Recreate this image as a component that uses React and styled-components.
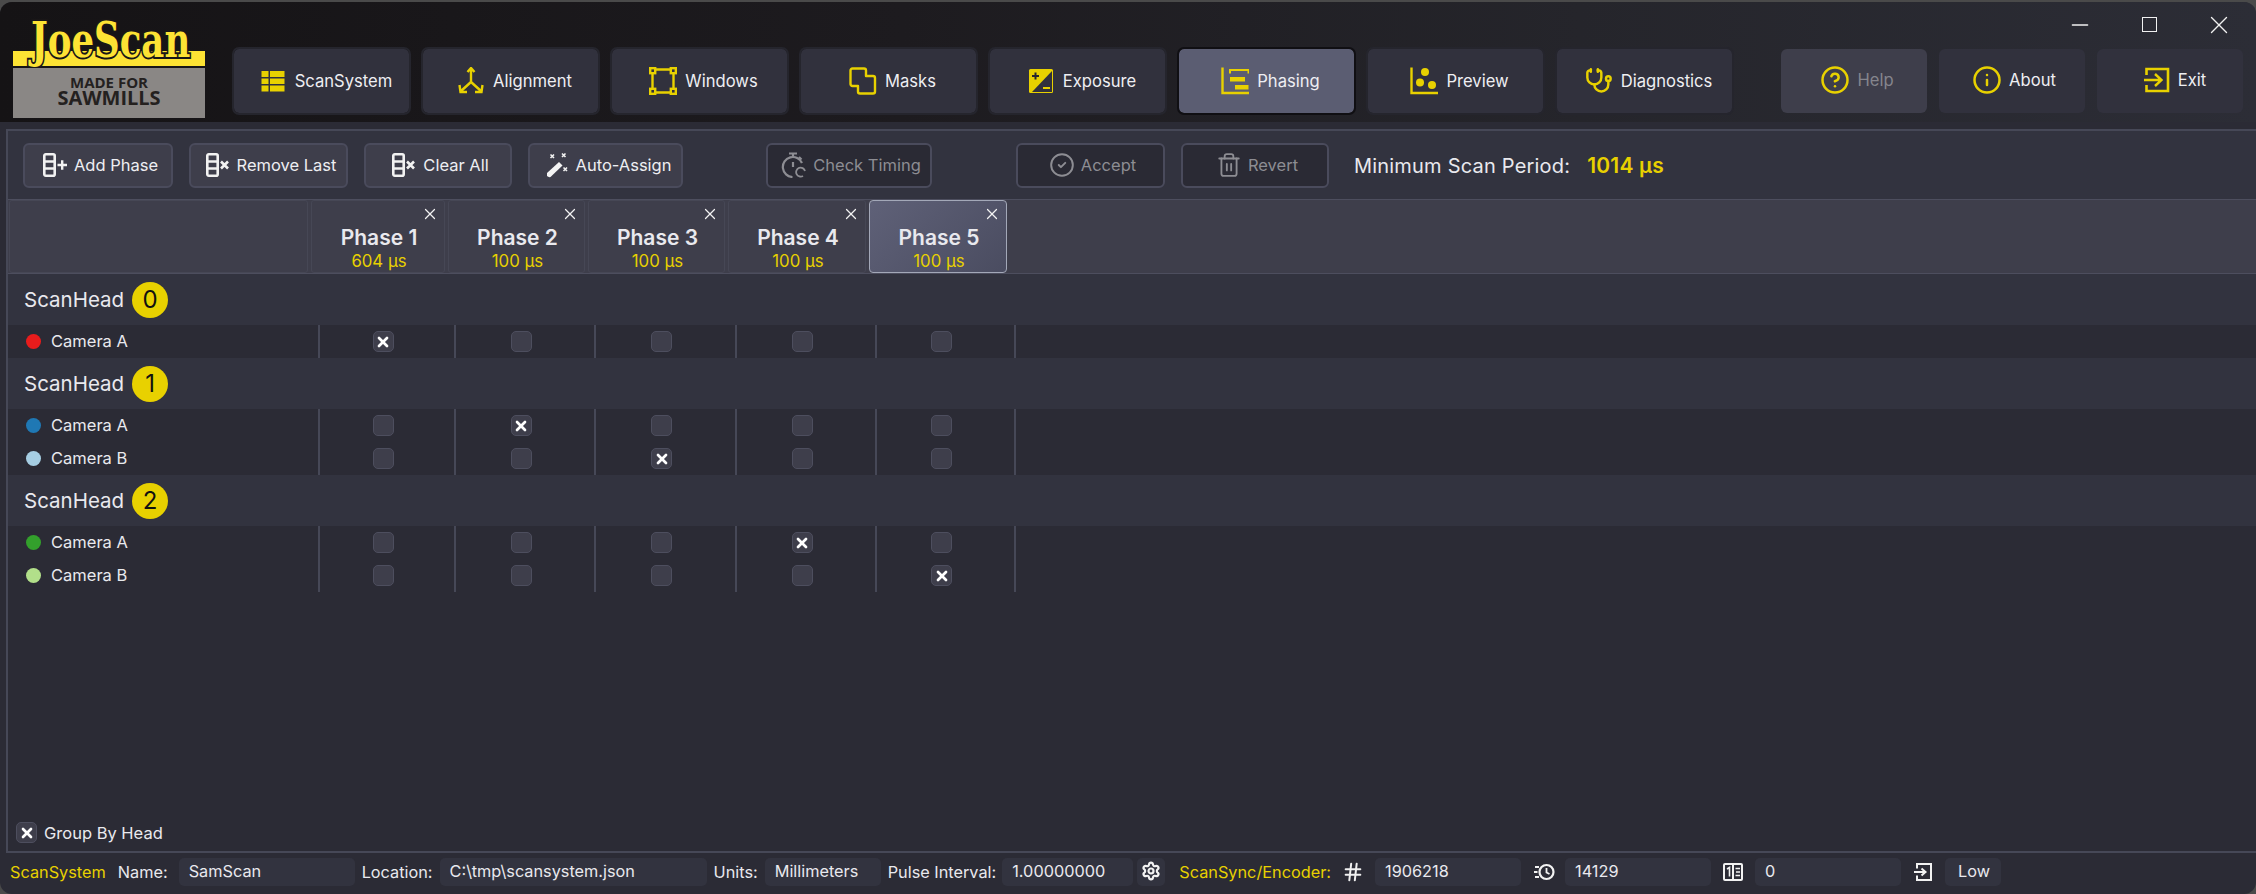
import React from "react";
import styled, { createGlobalStyle } from "styled-components";
import { Stethoscope, CircleHelp, Info, CircleCheck, Trash2, Hash, X, Minus, Settings } from "lucide-react";

const YELLOW = "#e8d100";

const GlobalStyle = createGlobalStyle`
  html, body {
    margin: 0;
    padding: 0;
    background: #4a4a4a;
    font-family: Inter, "Noto Sans", sans-serif;
    overflow: hidden;
  }
  * { box-sizing: border-box; }
`;

const Window = styled.div`
  width: 2256px;
  height: 892px;
  margin-top: 2px;
  display: flex;
  flex-direction: column;
  background: #2b2b35;
  border-radius: 12px;
  overflow: hidden;
  color: #e9e9ee;
`;

const TopBar = styled.div`
  height: 120px;
  flex: none;
  display: flex;
  padding-left: 13px;
  background: linear-gradient(90deg, #151315 0%, #1d1b1f 40%, #25252b 70%, #2c2d36 100%);
`;

const NavColumn = styled.div`
  display: flex;
  flex-direction: column;
  margin-left: 26px;
  flex: 1;
`;

const WindowControls = styled.div`
  height: 45px;
  display: flex;
  justify-content: flex-end;
  gap: 37.5px;
  padding-right: 21px;
  align-items: center;
`;

const WinButton = styled.div`
  width: 32px;
  display: flex;
  justify-content: center;
  color: #f1f1f1;
`;

const MaxBox = styled.div`
  width: 15px;
  height: 15px;
  border: 1.5px solid #f1f1f1;
`;

const NavRow = styled.div`
  display: flex;
  gap: 10px;
`;

const NavButton = styled.div`
  width: 179px;
  height: 68px;
  display: flex;
  align-items: center;
  justify-content: center;
  gap: 8px;
  padding-left: 8px;
  font-size: 16.6px;
  color: #eeeef2;
  background: ${(p) => (p.$active ? "#5b5d72" : "#31313d")};
  border: 2px solid ${(p) => (p.$active ? "#100f13" : "#25252d")};
  border-radius: 7px;
  background-clip: padding-box;
`;

const SideGroup = styled.div`
  display: flex;
  gap: 12px;
  margin-left: 37px;
  margin-top: 2px;
`;

const SideButton = styled.div`
  width: 146px;
  height: 64px;
  display: flex;
  align-items: center;
  justify-content: center;
  gap: 7px;
  padding-left: ${(p) => p.$pl || 0}px;
  font-size: 16.6px;
  border-radius: 6px;
  padding-bottom: 2px;
  color: ${(p) => (p.$off ? "#85858d" : "#eeeef2")};
  background: ${(p) => (p.$off ? "#3e3e4b" : "#31313d")};
`;

const Panel = styled.div`
  flex: 1;
  margin: 7px 0 0 6px;
  display: flex;
  flex-direction: column;
  border-top: 2px solid #464857;
  border-left: 2px solid #464857;
  border-bottom: 2px solid #464857;
  min-height: 0;
`;

const Toolbar = styled.div`
  height: 68px;
  flex: none;
  display: flex;
  align-items: flex-start;
  gap: 16px;
  padding: 12px 0 0 15px;
  background: #32333f;
`;

const ToolButton = styled.div`
  width: ${(p) => p.$w}px;
  height: 45px;
  margin-left: ${(p) => p.$ml || 0}px;
  display: flex;
  align-items: center;
  justify-content: center;
  gap: 6px;
  padding: 0 0 1px 4px;
  font-size: 16.5px;
  border-radius: 6px;
  border: 2px solid #4a4b5c;
  color: ${(p) => (p.$off ? "#8d8d93" : "#eeeef2")};
  background: ${(p) => (p.$off ? "#2a2a34" : "#3e3e4b")};
`;

const ScanPeriod = styled.div`
  height: 45px;
  margin-left: 9px;
  display: flex;
  align-items: center;
  gap: 17px;
  font-size: 20px;
  letter-spacing: 0.2px;
`;

const PeriodValue = styled.span`
  color: ${YELLOW};
  font-weight: 600;
  font-size: 21px;
`;

const HeaderRow = styled.div`
  height: 75px;
  flex: none;
  display: flex;
  gap: 3px;
  padding-left: 1px;
  background: #3e3e4b;
  border-top: 1px solid #4d4e5e;
  border-bottom: 1px solid #4d4e5e;
`;

const HeaderBlank = styled.div`
  width: 299px;
  border: 1px solid #464755;
  border-radius: 3px;
`;

const PhaseCell = styled.div`
  position: relative;
  width: ${(p) => p.$w}px;
  display: flex;
  flex-direction: column;
  align-items: center;
  justify-content: flex-end;
  padding: 0 0 1px 2px;
  border: 1px solid ${(p) => (p.$active ? "#a3a8b8" : "#464755")};
  border-radius: ${(p) => (p.$active ? 4 : 3)}px;
  background: ${(p) => (p.$active ? "linear-gradient(135deg, #5f6178, #4a4c60)" : "transparent")};
`;

const PhaseClose = styled.div`
  position: absolute;
  top: 4px;
  right: 5px;
  display: flex;
  color: #f2f2f2;
`;

const PhaseName = styled.div`
  font-size: 21px;
  font-weight: 600;
  line-height: 26px;
`;

const PhaseTime = styled.div`
  font-size: 16.8px;
  line-height: 20px;
  color: ${YELLOW};
`;

const HeadRow = styled.div`
  height: 51px;
  flex: none;
  display: flex;
  align-items: center;
  gap: 8px;
  padding-left: 16px;
  background: #32333f;
  font-size: 20.5px;
`;

const HeadBadge = styled.span`
  width: 36px;
  height: 36px;
  display: flex;
  align-items: center;
  justify-content: center;
  border-radius: 50%;
  background: ${YELLOW};
  color: #111;
  font-size: 24px;
`;

const CameraRow = styled.div`
  height: 33px;
  flex: none;
  display: flex;
`;

const CameraName = styled.div`
  width: 310px;
  display: flex;
  align-items: center;
  gap: 10px;
  padding-left: 18px;
  padding-bottom: 1px;
  font-size: 16.5px;
`;

const Dot = styled.span`
  width: 15px;
  height: 15px;
  border-radius: 50%;
  background: ${(p) => p.$color};
`;

const CheckCell = styled.div`
  width: ${(p) => p.$w}px;
  display: flex;
  align-items: center;
  justify-content: center;
  padding-right: 8px;
  border-left: 2px solid #464857;
  ${(p) => p.$last && "border-right: 2px solid #464857;"}
`;

const Check = styled.div`
  width: 21px;
  height: 21px;
  display: flex;
  align-items: center;
  justify-content: center;
  border-radius: 5px;
  background: #3e3e4b;
  border: 1px solid #4d4e5e;
  color: #fff;
`;

const GroupRow = styled.label`
  margin-top: auto;
  margin-bottom: 8px;
  display: flex;
  align-items: center;
  gap: 7px;
  padding-left: 8px;
  font-size: 16.5px;
`;

const Footer = styled.div`
  flex: none;
  height: 41px;
  display: flex;
  align-items: center;
  padding: 0 0 3px 10px;
  font-size: 16.3px;
`;

const FootLabel = styled.span`
  margin-left: ${(p) => p.$ml ?? 7}px;
  white-space: nowrap;
  color: ${(p) => (p.$yellow ? YELLOW : "#e9e9ee")};
`;

const Field = styled.div`
  width: ${(p) => p.$w}px;
  height: 28px;
  margin-left: ${(p) => p.$ml ?? 7}px;
  display: flex;
  align-items: center;
  padding-left: ${(p) => p.$pl ?? 10}px;
  padding-bottom: 2px;
  border-radius: 5px;
  background: #32333f;
  color: #e9e9ee;
  white-space: nowrap;
`;

const FootIcon = styled.span`
  margin-left: ${(p) => p.$ml}px;
  display: flex;
  color: #f0f0f0;
`;

const JoeLogo = () => (
  <svg width="193" height="114" viewBox="0 -14 193 114" style={{ marginTop: 3, flex: "none" }}>
    <path d="M0 32 H192 V47 H0 Z" fill="#fde334" />
    <text
      transform="translate(18 38) scale(0.74 1)"
      fontFamily="'DejaVu Serif', serif"
      fontWeight="700"
      fontSize="48"
      fill="#fde334"
      stroke="#191617"
      strokeWidth="4"
      paintOrder="stroke"
    >
      JoeScan
    </text>
    <rect x="0" y="49" width="192" height="50" fill="#8a8785" />
    <text x="96" y="69" textAnchor="middle" fontFamily="'Open Sans', sans-serif" fontWeight="700" fontSize="15" fill="#24211f">
      MADE FOR
    </text>
    <text x="96" y="86" textAnchor="middle" fontFamily="'Open Sans', sans-serif" fontWeight="700" fontSize="20" fill="#24211f">
      SAWMILLS
    </text>
  </svg>
);

const Ico = ({ children, size = 28, box = 28 }) => (
  <svg width={size} height={size} viewBox={`0 0 ${box} ${box}`} fill="none" stroke={YELLOW} strokeWidth="2.4" style={{ flex: "none" }}>
    {children}
  </svg>
);

const TableIcon = () => (
  <Ico>
    <g fill={YELLOW} stroke="none">
      <rect x="2.5" y="4" width="7" height="6" />
      <rect x="11" y="4" width="14.5" height="6" />
      <rect x="2.5" y="11.5" width="7" height="5.5" />
      <rect x="11" y="11.5" width="14.5" height="5.5" />
      <rect x="2.5" y="18.5" width="7" height="6" />
      <rect x="11" y="18.5" width="14.5" height="6" />
    </g>
  </Ico>
);

const AlignIcon = () => (
  <Ico>
    <path d="M14 1 V15 M14 15 L4 24 M14 15 L24 24 M10.5 5 L14 1 L17.5 5 M2.5 18 L3.5 25 L10 25 M25.5 18 L24.5 25 L18 25" />
  </Ico>
);

const WindowsIcon = () => (
  <Ico>
    <path d="M6 2.5 H22 M6 25.5 H22 M3.5 5 V23 M24.5 5 V23" />
    <rect x="1.2" y="1.2" width="5" height="5" />
    <rect x="21.8" y="1.2" width="5" height="5" />
    <rect x="1.2" y="21.8" width="5" height="5" />
    <rect x="21.8" y="21.8" width="5" height="5" />
  </Ico>
);

const MasksIcon = () => (
  <Ico>
    <path d="M3.5 1.5 H15 a2 2 0 0 1 2 2 V9 H24 a2 2 0 0 1 2 2 V24.5 a2 2 0 0 1 -2 2 H11 a2 2 0 0 1 -2 -2 V19 H3.5 a2 2 0 0 1 -2 -2 V3.5 a2 2 0 0 1 2 -2 Z" strokeLinejoin="round" />
  </Ico>
);

const ExposureIcon = () => (
  <Ico>
    <rect x="2" y="2" width="24" height="24" rx="1.5" fill={YELLOW} stroke="none" />
    <path d="M25 4 L5 25 H25 Z" fill="#31313d" stroke="none" />
    <path d="M5 9 H12 M8.5 5.5 V12.5" stroke="#26262e" strokeWidth="2" />
    <path d="M16 21 H23" strokeWidth="2.2" />
  </Ico>
);

const PhasingIcon = () => (
  <Ico>
    <path d="M1.5 0.5 V26 H28" />
    <path d="M9 6.5 V3 H27.5 V6.5" strokeWidth="2" />
    <rect x="9" y="10" width="15" height="4.5" fill={YELLOW} stroke="none" />
    <rect x="14" y="18" width="13.5" height="4.5" fill={YELLOW} stroke="none" />
  </Ico>
);

const PreviewIcon = () => (
  <Ico>
    <path d="M1.5 0.5 V26 H28" />
    <g fill={YELLOW} stroke="none">
      <circle cx="15" cy="5" r="4" />
      <circle cx="10" cy="15.5" r="4" />
      <circle cx="22" cy="18" r="4" />
    </g>
  </Ico>
);

const ExitIcon = () => (
  <Ico size={28}>
    <path d="M3.5 9 V3 H25 V25 H3.5 V19" strokeWidth="2.6" />
    <path d="M1 14 H18 M12 8 L18.5 14 L12 20" strokeWidth="2.4" />
  </Ico>
);

const PhaseBars = () => (
  <g fill="none" stroke="#f2f2f2" strokeWidth="2.6">
    <rect x="2.3" y="2.3" width="10.4" height="21.4" rx="1.5" />
    <path d="M2 9.5 H13 M2 16.5 H13" />
  </g>
);

const AddIcon = () => (
  <svg width="26" height="26" viewBox="0 0 26 26" style={{ flex: "none" }}>
    <PhaseBars />
    <path d="M15.5 13 H25 M20.2 8.3 V17.7" stroke="#f2f2f2" strokeWidth="2.4" />
  </svg>
);

const RemoveIcon = () => (
  <svg width="26" height="26" viewBox="0 0 26 26" style={{ flex: "none" }}>
    <PhaseBars />
    <path d="M16 9.5 L23 16.5 M23 9.5 L16 16.5" stroke="#f2f2f2" strokeWidth="2.6" />
  </svg>
);

const WandIcon = () => (
  <svg width="26" height="26" viewBox="0 0 26 26" style={{ flex: "none" }}>
    <path d="M3 21 L15 10 L18.5 13.5 L6.5 25 Q4.5 25.5 3 24 Z" fill="#f4f4f4" />
    <g stroke="#f2f2f2" strokeWidth="1.6">
      <path d="M6.5 2.5 L10 6 M10 2.5 L6.5 6" />
      <path d="M18 1.5 L21.5 5 M21.5 1.5 L18 5" />
      <path d="M19.5 15.5 L23 19 M23 15.5 L19.5 19" />
    </g>
  </svg>
);

const TimerIcon = () => (
  <svg width="26" height="26" viewBox="0 0 26 26" fill="none" stroke="#8d8d93" strokeWidth="2.2" style={{ flex: "none" }}>
    <path d="M8 1.5 H16 M12 2 V5 M12 10 V15" />
    <path d="M21 11 A10 10 0 1 0 11.5 25" />
    <path d="M18 5 L20.5 7.5" />
    <path d="M24 19 A4.5 4.5 0 1 0 22 24" strokeWidth="1.8" />
  </svg>
);

const HistoryIcon = () => (
  <svg width="22" height="22" viewBox="0 0 22 22" fill="none" stroke="#f2f2f2" strokeWidth="2.2" style={{ flex: "none" }}>
    <circle cx="13.5" cy="11" r="7" />
    <path d="M13.5 7 V11.5 L16.5 13" strokeWidth="1.8" />
    <path d="M2 6 H6 M1 11 H4.5 M2 16 H6" strokeWidth="1.8" />
  </svg>
);

const BinaryIcon = () => (
  <svg width="22" height="22" viewBox="0 0 22 22" fill="none" stroke="#f2f2f2" strokeWidth="2" style={{ flex: "none" }}>
    <rect x="2" y="3" width="18" height="16" rx="1" />
    <path d="M11 3 V19" />
    <path d="M5 8 L7.5 6.5 V15.5 M13.5 7.5 H18 M14 11 H18 M13.5 14.5 H18" strokeWidth="1.6" />
  </svg>
);

const EnterIcon = () => (
  <svg width="20" height="20" viewBox="0 0 20 20" fill="none" stroke="#f2f2f2" strokeWidth="2" style={{ flex: "none" }}>
    <path d="M4 6.5 V2 H18 V18 H4 V13.5" />
    <path d="M1 10 H12 M8.5 6.5 L12.5 10 L8.5 13.5" />
  </svg>
);

const navItems = [
  { label: "ScanSystem", icon: <TableIcon /> },
  { label: "Alignment", icon: <AlignIcon /> },
  { label: "Windows", icon: <WindowsIcon /> },
  { label: "Masks", icon: <MasksIcon /> },
  { label: "Exposure", icon: <ExposureIcon /> },
  { label: "Phasing", icon: <PhasingIcon />, active: true },
  { label: "Preview", icon: <PreviewIcon /> },
  { label: "Diagnostics", icon: <Stethoscope size={28} color={YELLOW} strokeWidth={2.1} /> },
];

const phases = [
  { name: "Phase 1", time: "604 µs", w: 134 },
  { name: "Phase 2", time: "100 µs", w: 137 },
  { name: "Phase 3", time: "100 µs", w: 137 },
  { name: "Phase 4", time: "100 µs", w: 138 },
  { name: "Phase 5", time: "100 µs", w: 138, active: true },
];

const cellWidths = [136, 140, 141, 140, 141];

const heads = [
  { id: 0, cameras: [{ name: "Camera A", color: "#e81c1c", on: 0 }] },
  {
    id: 1,
    cameras: [
      { name: "Camera A", color: "#1f78b4", on: 1 },
      { name: "Camera B", color: "#a6cee3", on: 2 },
    ],
  },
  {
    id: 2,
    cameras: [
      { name: "Camera A", color: "#33a02c", on: 3 },
      { name: "Camera B", color: "#b2df8a", on: 4 },
    ],
  },
];

const App = () => {
  return (
    <>
      <GlobalStyle />
      <Window>
        <TopBar>
          <JoeLogo />
          <NavColumn>
            <WindowControls>
              <WinButton><Minus size={26} strokeWidth={1.3} /></WinButton>
              <WinButton><MaxBox /></WinButton>
              <WinButton><X size={30} strokeWidth={1.1} /></WinButton>
            </WindowControls>
            <NavRow>
              {navItems.map((item) => (
                <NavButton key={item.label} $active={item.active}>
                  {item.icon}
                  {item.label}
                </NavButton>
              ))}
              <SideGroup>
                <SideButton $off $pl={6}>
                  <CircleHelp size={30} color={YELLOW} strokeWidth={2} />
                  Help
                </SideButton>
                <SideButton $pl={4}>
                  <Info size={30} color={YELLOW} strokeWidth={2} />
                  About
                </SideButton>
                <SideButton $pl={9}>
                  <ExitIcon />
                  Exit
                </SideButton>
              </SideGroup>
            </NavRow>
          </NavColumn>
        </TopBar>

        <Panel>
          <Toolbar>
            <ToolButton $w={150}><AddIcon />Add Phase</ToolButton>
            <ToolButton $w={159}><RemoveIcon />Remove Last</ToolButton>
            <ToolButton $w={148}><RemoveIcon />Clear All</ToolButton>
            <ToolButton $w={155}><WandIcon />Auto-Assign</ToolButton>
            <ToolButton $w={166} $ml={67} $off><TimerIcon />Check Timing</ToolButton>
            <ToolButton $w={149} $ml={68} $off><CircleCheck size={26} strokeWidth={1.8} />Accept</ToolButton>
            <ToolButton $w={148} $off><Trash2 size={26} strokeWidth={1.7} />Revert</ToolButton>
            <ScanPeriod>
              Minimum Scan Period:
              <PeriodValue>1014 µs</PeriodValue>
            </ScanPeriod>
          </Toolbar>

          <HeaderRow>
            <HeaderBlank />
            {phases.map((p) => (
              <PhaseCell key={p.name} $w={p.w} $active={p.active}>
                <PhaseClose><X size={18} strokeWidth={1.6} /></PhaseClose>
                <PhaseName>{p.name}</PhaseName>
                <PhaseTime>{p.time}</PhaseTime>
              </PhaseCell>
            ))}
          </HeaderRow>

          {heads.map((head) => (
            <React.Fragment key={head.id}>
              <HeadRow>
                ScanHead
                <HeadBadge>{head.id}</HeadBadge>
              </HeadRow>
              {head.cameras.map((cam) => (
                <CameraRow key={cam.name}>
                  <CameraName>
                    <Dot $color={cam.color} />
                    {cam.name}
                  </CameraName>
                  {cellWidths.map((w, i) => (
                    <CheckCell key={i} $w={w} $last={i === 4}>
                      <Check>{i === cam.on && <X size={16} strokeWidth={4} />}</Check>
                    </CheckCell>
                  ))}
                </CameraRow>
              ))}
            </React.Fragment>
          ))}

          <GroupRow>
            <Check><X size={16} strokeWidth={4} /></Check>
            Group By Head
          </GroupRow>
        </Panel>

        <Footer>
          <FootLabel $yellow $ml={0}>ScanSystem</FootLabel>
          <FootLabel $ml={12}>Name:</FootLabel>
          <Field $w={176} $ml={11}>SamScan</Field>
          <FootLabel>Location:</FootLabel>
          <Field $w={267}>C:\tmp\scansystem.json</Field>
          <FootLabel>Units:</FootLabel>
          <Field $w={116}>Millimeters</Field>
          <FootLabel>Pulse Interval:</FootLabel>
          <Field $w={131} $ml={6}>1.00000000</Field>
          <Field $w={28} $ml={4} $pl={4}><Settings size={20} strokeWidth={2.6} color="#f2f2f2" /></Field>
          <FootLabel $yellow $ml={14}>ScanSync/Encoder:</FootLabel>
          <FootIcon $ml={11}><Hash size={22} strokeWidth={2.2} /></FootIcon>
          <Field $w={146} $ml={11}>1906218</Field>
          <FootIcon $ml={12}><HistoryIcon /></FootIcon>
          <Field $w={146} $ml={10}>14129</Field>
          <FootIcon $ml={11}><BinaryIcon /></FootIcon>
          <Field $w={146} $ml={11}>0</Field>
          <FootIcon $ml={12}><EnterIcon /></FootIcon>
          <Field $w={56} $ml={12} $pl={13}>Low</Field>
        </Footer>
      </Window>
    </>
  );
};

export default App;
